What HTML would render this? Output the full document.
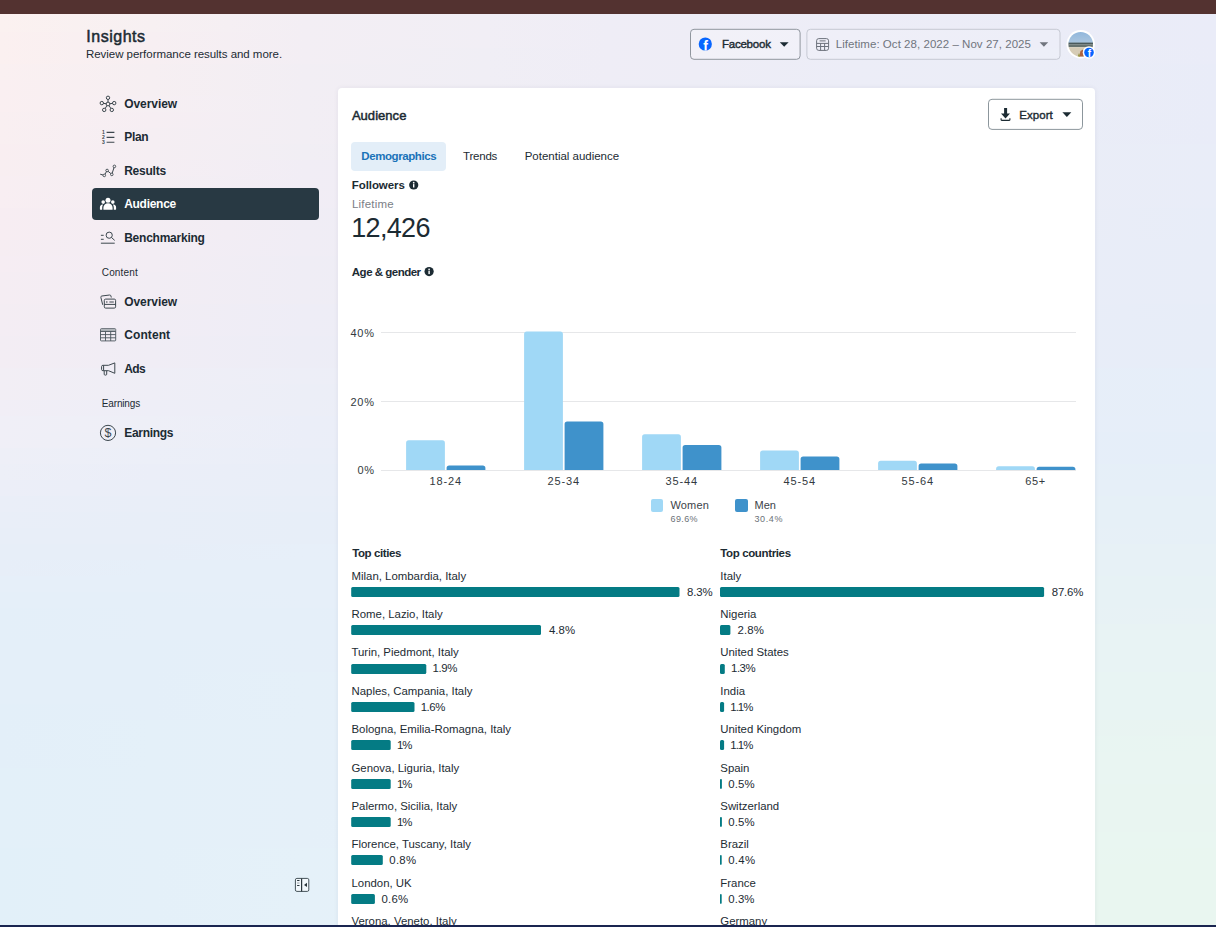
<!DOCTYPE html>
<html lang="en">
<head>
<meta charset="utf-8">
<title>Insights - Audience</title>
<style>
*{box-sizing:border-box;margin:0;padding:0}
html,body{width:1216px;height:927px;overflow:hidden}
body{font-family:"Liberation Sans",sans-serif;color:#1c2b33;position:relative;background:#f1eef5}
.abs{position:absolute}
.bgs{position:absolute;left:0;width:1216px}
#topbar{left:0;top:0;width:1216px;height:13.5px;background:#533230}
#botbar{left:0;top:924.5px;width:1216px;height:3px;background:#1a2550}
.t{position:absolute;white-space:pre;line-height:1;color:#1c2b33}
svg{position:absolute;overflow:visible}
#sel{left:92.3px;top:188.3px;width:226.5px;height:31.3px;background:#283943;border-radius:4px}
.btn{position:absolute;border:1px solid #8d939b;border-radius:4px;background:rgba(255,255,255,.3)}
#card{left:338px;top:88px;width:757px;height:850px;background:#fff;border-radius:4px;box-shadow:0 0 5px rgba(40,40,80,.07)}
#tab{left:351px;top:142.3px;width:95px;height:28.5px;background:#e3eef8;border-radius:4px}
.bar{position:absolute;height:10px;background:#047b84;border-radius:1.5px}
.grid{position:absolute;left:381px;width:695px;height:1px;background:#e6e7e9}
.bw{position:absolute;background:#a0d8f6;border-radius:3px 3px 0 0}
.bm{position:absolute;background:#3f92cb;border-radius:3px 3px 0 0}
</style>
</head>
<body>
<div id="bg"><div class="bgs" style="top:0px;height:16px;background:linear-gradient(90deg,#fcf1f0 0%,#f8f0f2 12.5%,#f3eff4 25%,#f1eef5 40%,#efedf6 50%,#eeedf6 57%,#ededf7 70%,#ebecf7 85%,#eaecf8 100%)"></div><div class="bgs" style="top:16px;height:16px;background:linear-gradient(90deg,#fbf1f0 0%,#f7f0f2 12.5%,#f3eef4 25%,#f1eef5 40%,#efedf6 50%,#eeedf6 57%,#ededf7 70%,#ebecf7 85%,#eaecf8 100%)"></div><div class="bgs" style="top:32px;height:16px;background:linear-gradient(90deg,#fbf0f0 0%,#f7eff2 12.5%,#f3eef4 25%,#f1eef5 40%,#efedf6 50%,#eeedf6 57%,#ededf7 70%,#ebecf7 85%,#eaecf8 100%)"></div><div class="bgs" style="top:48px;height:16px;background:linear-gradient(90deg,#fbf0f0 0%,#f7eff2 12.5%,#f3eef4 25%,#f0eef5 40%,#efedf6 50%,#eeedf6 57%,#ecedf7 70%,#ebedf7 85%,#eaecf8 100%)"></div><div class="bgs" style="top:64px;height:16px;background:linear-gradient(90deg,#faf0f1 0%,#f6eff2 12.5%,#f2eef4 25%,#f0eef5 40%,#efedf6 50%,#eeedf6 57%,#ecedf7 70%,#ebedf7 85%,#e9ecf8 100%)"></div><div class="bgs" style="top:80px;height:16px;background:linear-gradient(90deg,#faeff1 0%,#f6eff2 12.5%,#f2eef4 25%,#f0eef5 40%,#eeedf6 50%,#ededf6 57%,#ecedf7 70%,#ebedf7 85%,#e9ecf8 100%)"></div><div class="bgs" style="top:96px;height:16px;background:linear-gradient(90deg,#faeff1 0%,#f6eff3 12.5%,#f2eef4 25%,#f0edf5 40%,#eeedf6 50%,#ededf6 57%,#ecedf7 70%,#ebedf7 85%,#e9ecf8 100%)"></div><div class="bgs" style="top:112px;height:16px;background:linear-gradient(90deg,#f9eff1 0%,#f6eef3 12.5%,#f2eef4 25%,#f0edf5 40%,#eeedf6 50%,#ededf6 57%,#ecedf7 70%,#eaedf7 85%,#e9ecf8 100%)"></div><div class="bgs" style="top:128px;height:16px;background:linear-gradient(90deg,#f9eff1 0%,#f5eef3 12.5%,#f2eef4 25%,#efedf5 40%,#eeedf6 50%,#ededf6 57%,#ecedf7 70%,#eaedf7 85%,#e9ecf8 100%)"></div><div class="bgs" style="top:144px;height:16px;background:linear-gradient(90deg,#f9eef1 0%,#f5eef3 12.5%,#f1eef4 25%,#efedf5 40%,#eeedf6 50%,#ededf6 57%,#ecedf7 70%,#eaedf7 85%,#e9edf8 100%)"></div><div class="bgs" style="top:160px;height:16px;background:linear-gradient(90deg,#f8eef1 0%,#f5eef3 12.5%,#f1edf5 25%,#efedf5 40%,#eeedf6 50%,#ededf6 57%,#ebedf7 70%,#eaedf7 85%,#e9edf8 100%)"></div><div class="bgs" style="top:176px;height:16px;background:linear-gradient(90deg,#f8eef2 0%,#f4eef3 12.5%,#f1edf5 25%,#efedf5 40%,#ededf6 50%,#ecedf6 57%,#ebedf7 70%,#eaedf7 85%,#e9edf8 100%)"></div><div class="bgs" style="top:192px;height:16px;background:linear-gradient(90deg,#f8eef2 0%,#f4edf3 12.5%,#f1edf5 25%,#efedf6 40%,#ededf6 50%,#ecedf6 57%,#ebedf7 70%,#eaedf7 85%,#e9edf8 100%)"></div><div class="bgs" style="top:208px;height:16px;background:linear-gradient(90deg,#f7edf2 0%,#f4edf3 12.5%,#f0edf5 25%,#eeedf6 40%,#ededf6 50%,#ecedf7 57%,#ebedf7 70%,#eaedf7 85%,#e8edf8 100%)"></div><div class="bgs" style="top:224px;height:16px;background:linear-gradient(90deg,#f7edf2 0%,#f4edf3 12.5%,#f0edf5 25%,#eeedf6 40%,#ededf6 50%,#ecedf7 57%,#ebedf7 70%,#eaedf7 85%,#e8edf8 100%)"></div><div class="bgs" style="top:240px;height:16px;background:linear-gradient(90deg,#f6edf2 0%,#f3edf4 12.5%,#f0edf5 25%,#eeedf6 40%,#ededf6 50%,#ecedf7 57%,#ebedf7 70%,#e9edf8 85%,#e8edf8 100%)"></div><div class="bgs" style="top:256px;height:16px;background:linear-gradient(90deg,#f6edf3 0%,#f3edf4 12.5%,#efedf5 25%,#eeedf6 40%,#ecedf6 50%,#ebedf7 57%,#eaedf7 70%,#e9edf8 85%,#e8edf8 100%)"></div><div class="bgs" style="top:272px;height:16px;background:linear-gradient(90deg,#f5edf3 0%,#f2edf4 12.5%,#efedf5 25%,#ededf6 40%,#ecedf6 50%,#ebedf7 57%,#eaedf7 70%,#e9edf8 85%,#e8edf8 100%)"></div><div class="bgs" style="top:288px;height:16px;background:linear-gradient(90deg,#f5edf3 0%,#f2edf4 12.5%,#efedf5 25%,#ededf6 40%,#ecedf7 50%,#ebedf7 57%,#eaedf7 70%,#e9edf8 85%,#e8edf8 100%)"></div><div class="bgs" style="top:304px;height:16px;background:linear-gradient(90deg,#f4edf3 0%,#f1edf4 12.5%,#eeedf6 25%,#ededf6 40%,#ebedf7 50%,#ebedf7 57%,#eaedf7 70%,#e9edf8 85%,#e7edf8 100%)"></div><div class="bgs" style="top:320px;height:16px;background:linear-gradient(90deg,#f4edf4 0%,#f1edf5 12.5%,#eeedf6 25%,#ecedf6 40%,#ebedf7 50%,#eaedf7 57%,#e9edf7 70%,#e8edf8 85%,#e7edf8 100%)"></div><div class="bgs" style="top:336px;height:16px;background:linear-gradient(90deg,#f3edf4 0%,#f0edf5 12.5%,#ededf6 25%,#ecedf7 40%,#ebedf7 50%,#eaedf7 57%,#e9edf8 70%,#e8edf8 85%,#e7edf8 100%)"></div><div class="bgs" style="top:352px;height:16px;background:linear-gradient(90deg,#f3edf4 0%,#f0edf5 12.5%,#ededf6 25%,#ebedf7 40%,#eaedf7 50%,#eaedf7 57%,#e9edf8 70%,#e8edf8 85%,#e7edf8 100%)"></div><div class="bgs" style="top:368px;height:16px;background:linear-gradient(90deg,#f2eef5 0%,#efeef6 12.5%,#edeef7 25%,#ebeef7 40%,#eaeef7 50%,#e9eef8 57%,#e8eef8 70%,#e7eef8 85%,#e6eef9 100%)"></div><div class="bgs" style="top:384px;height:16px;background:linear-gradient(90deg,#f2eef5 0%,#efeef6 12.5%,#eceef7 25%,#ebeef7 40%,#eaeef8 50%,#e9eef8 57%,#e8eef8 70%,#e7eef8 85%,#e6eef9 100%)"></div><div class="bgs" style="top:400px;height:16px;background:linear-gradient(90deg,#f1eef6 0%,#eeeef7 12.5%,#eceef7 25%,#eaeef8 40%,#e9eef8 50%,#e9eef8 57%,#e8eef8 70%,#e7eef8 85%,#e6eef9 100%)"></div><div class="bgs" style="top:416px;height:16px;background:linear-gradient(90deg,#f0eff7 0%,#eeeff7 12.5%,#ebeef8 25%,#eaeef8 40%,#e9eef8 50%,#e8eef8 57%,#e7eef8 70%,#e7eef9 85%,#e6eef9 100%)"></div><div class="bgs" style="top:432px;height:16px;background:linear-gradient(90deg,#f0eff7 0%,#edeff7 12.5%,#ebeef8 25%,#e9eef8 40%,#e8eef8 50%,#e8eef8 57%,#e7eef9 70%,#e6eef9 85%,#e5eef9 100%)"></div><div class="bgs" style="top:448px;height:16px;background:linear-gradient(90deg,#eeeff7 0%,#eceff8 12.5%,#eaeef8 25%,#e9eef8 40%,#e8eef8 50%,#e7eef8 57%,#e7eef9 70%,#e6eef9 85%,#e5eef9 100%)"></div><div class="bgs" style="top:464px;height:16px;background:linear-gradient(90deg,#edeff7 0%,#ebeef8 12.5%,#e9eef8 25%,#e8eef8 40%,#e7eef9 50%,#e7eef8 57%,#e7eef8 70%,#e6eff8 85%,#e5eff8 100%)"></div><div class="bgs" style="top:480px;height:16px;background:linear-gradient(90deg,#eceef8 0%,#eaeef8 12.5%,#e9eef8 25%,#e8eef8 40%,#e7eef9 50%,#e7eef8 57%,#e6eff8 70%,#e6eff8 85%,#e6eff8 100%)"></div><div class="bgs" style="top:496px;height:16px;background:linear-gradient(90deg,#eaeef8 0%,#e9eef8 12.5%,#e8eef8 25%,#e7eef8 40%,#e7eef9 50%,#e7eff8 57%,#e6eff8 70%,#e6f0f7 85%,#e6f0f7 100%)"></div><div class="bgs" style="top:512px;height:16px;background:linear-gradient(90deg,#e9eef8 0%,#e8eef8 12.5%,#e7eef8 25%,#e7eef9 40%,#e7eef9 50%,#e6eff8 57%,#e6eff8 70%,#e6f0f7 85%,#e6f0f7 100%)"></div><div class="bgs" style="top:528px;height:16px;background:linear-gradient(90deg,#e8eef8 0%,#e8eef8 12.5%,#e7eef8 25%,#e7eef9 40%,#e6eef9 50%,#e6eff8 57%,#e6f0f8 70%,#e7f0f7 85%,#e6f0f7 100%)"></div><div class="bgs" style="top:544px;height:16px;background:linear-gradient(90deg,#e7eef8 0%,#e7eef8 12.5%,#e7eff9 25%,#e6eff9 40%,#e6eff9 50%,#e6eff8 57%,#e7f0f7 70%,#e7f1f6 85%,#e7f1f6 100%)"></div><div class="bgs" style="top:560px;height:16px;background:linear-gradient(90deg,#e7eef8 0%,#e6eff9 12.5%,#e6eff9 25%,#e6eff9 40%,#e6eff9 50%,#e6eff8 57%,#e7f0f7 70%,#e7f1f6 85%,#e7f1f6 100%)"></div><div class="bgs" style="top:576px;height:16px;background:linear-gradient(90deg,#e6eff9 0%,#e6eff9 12.5%,#e6eff9 25%,#e6eff9 40%,#e6eff9 50%,#e6eff8 57%,#e7f0f7 70%,#e7f2f5 85%,#e7f2f5 100%)"></div><div class="bgs" style="top:592px;height:16px;background:linear-gradient(90deg,#e5eff9 0%,#e5eff9 12.5%,#e6eff9 25%,#e6eff9 40%,#e6eff9 50%,#e6f0f8 57%,#e7f1f7 70%,#e7f2f5 85%,#e7f2f5 100%)"></div><div class="bgs" style="top:608px;height:16px;background:linear-gradient(90deg,#e4eff9 0%,#e5eff9 12.5%,#e5eff9 25%,#e6eff9 40%,#e6eff9 50%,#e6f0f8 57%,#e7f1f6 70%,#e7f2f5 85%,#e8f2f5 100%)"></div><div class="bgs" style="top:624px;height:16px;background:linear-gradient(90deg,#e4eff9 0%,#e5eff9 12.5%,#e5eff9 25%,#e5eff9 40%,#e6eff9 50%,#e6f0f8 57%,#e7f1f6 70%,#e8f3f4 85%,#e8f3f4 100%)"></div><div class="bgs" style="top:640px;height:16px;background:linear-gradient(90deg,#e4eff9 0%,#e4eff9 12.5%,#e5eff9 25%,#e6eff9 40%,#e6eff9 50%,#e6f0f8 57%,#e7f2f6 70%,#e8f3f4 85%,#e8f3f4 100%)"></div><div class="bgs" style="top:656px;height:16px;background:linear-gradient(90deg,#e4eff9 0%,#e4eff9 12.5%,#e5eff9 25%,#e6eff9 40%,#e6f0f9 50%,#e6f0f8 57%,#e7f2f6 70%,#e8f3f4 85%,#e8f3f4 100%)"></div><div class="bgs" style="top:672px;height:16px;background:linear-gradient(90deg,#e4eff9 0%,#e4eff9 12.5%,#e5f0f9 25%,#e6f0f9 40%,#e6f0f9 50%,#e6f0f8 57%,#e7f2f6 70%,#e8f4f3 85%,#e8f4f3 100%)"></div><div class="bgs" style="top:688px;height:16px;background:linear-gradient(90deg,#e4eff9 0%,#e4eff9 12.5%,#e5f0f9 25%,#e6f0f9 40%,#e6f0f9 50%,#e7f1f7 57%,#e7f2f5 70%,#e8f4f3 85%,#e8f4f3 100%)"></div><div class="bgs" style="top:704px;height:16px;background:linear-gradient(90deg,#e3eff9 0%,#e4eff9 12.5%,#e5f0f9 25%,#e6f0f9 40%,#e6f0f9 50%,#e7f1f7 57%,#e7f2f5 70%,#e8f4f3 85%,#e8f4f3 100%)"></div><div class="bgs" style="top:720px;height:16px;background:linear-gradient(90deg,#e3eff9 0%,#e4f0f9 12.5%,#e5f0f9 25%,#e6f0f9 40%,#e6f0f9 50%,#e7f1f7 57%,#e8f3f5 70%,#e8f4f2 85%,#e9f4f2 100%)"></div><div class="bgs" style="top:736px;height:16px;background:linear-gradient(90deg,#e3eff9 0%,#e4f0f9 12.5%,#e5f0f9 25%,#e6f0f9 40%,#e6f0f9 50%,#e7f1f7 57%,#e8f3f5 70%,#e8f5f2 85%,#e9f5f2 100%)"></div><div class="bgs" style="top:752px;height:16px;background:linear-gradient(90deg,#e3eff9 0%,#e4f0f9 12.5%,#e5f0f9 25%,#e6f0f9 40%,#e6f0f9 50%,#e7f1f7 57%,#e8f3f5 70%,#e9f5f2 85%,#e9f5f2 100%)"></div><div class="bgs" style="top:768px;height:16px;background:linear-gradient(90deg,#e3f0f9 0%,#e4f0f9 12.5%,#e5f0f9 25%,#e6f0f9 40%,#e6f0f9 50%,#e7f1f7 57%,#e8f3f5 70%,#e9f5f2 85%,#e9f5f2 100%)"></div><div class="bgs" style="top:784px;height:16px;background:linear-gradient(90deg,#e3f0f9 0%,#e4f0f9 12.5%,#e5f0f9 25%,#e6f0f9 40%,#e6f0f9 50%,#e7f1f7 57%,#e8f3f4 70%,#e9f5f1 85%,#e9f5f1 100%)"></div><div class="bgs" style="top:800px;height:16px;background:linear-gradient(90deg,#e3f0f9 0%,#e4f0f9 12.5%,#e5f0f9 25%,#e6f0f9 40%,#e6f1f8 50%,#e7f2f7 57%,#e8f3f4 70%,#e9f5f1 85%,#e9f5f1 100%)"></div><div class="bgs" style="top:816px;height:16px;background:linear-gradient(90deg,#e3f0f9 0%,#e4f0f9 12.5%,#e5f0f9 25%,#e6f1f9 40%,#e6f1f8 50%,#e7f2f7 57%,#e8f3f4 70%,#e9f5f1 85%,#e9f5f1 100%)"></div><div class="bgs" style="top:832px;height:16px;background:linear-gradient(90deg,#e3f0f9 0%,#e4f0f9 12.5%,#e5f0f9 25%,#e6f1f9 40%,#e7f1f8 50%,#e7f2f7 57%,#e8f4f4 70%,#e9f6f1 85%,#e9f6f1 100%)"></div><div class="bgs" style="top:848px;height:16px;background:linear-gradient(90deg,#e2f0f9 0%,#e4f0f9 12.5%,#e5f1f9 25%,#e6f1f8 40%,#e7f1f8 50%,#e7f2f7 57%,#e8f4f4 70%,#e9f6f1 85%,#e9f6f0 100%)"></div><div class="bgs" style="top:864px;height:16px;background:linear-gradient(90deg,#e2f0f9 0%,#e4f0f9 12.5%,#e5f1f9 25%,#e6f1f8 40%,#e7f1f8 50%,#e7f2f7 57%,#e8f4f4 70%,#e9f6f0 85%,#e9f6f0 100%)"></div><div class="bgs" style="top:880px;height:16px;background:linear-gradient(90deg,#e2f0f9 0%,#e4f0f9 12.5%,#e5f1f9 25%,#e6f1f8 40%,#e7f1f8 50%,#e7f2f7 57%,#e8f4f4 70%,#e9f6f0 85%,#e9f6f0 100%)"></div><div class="bgs" style="top:896px;height:16px;background:linear-gradient(90deg,#e2f0f9 0%,#e4f0f9 12.5%,#e5f1f9 25%,#e6f1f8 40%,#e7f1f8 50%,#e8f2f7 57%,#e8f4f4 70%,#e9f6f0 85%,#e9f6f0 100%)"></div><div class="bgs" style="top:912px;height:15px;background:linear-gradient(90deg,#e2f0f9 0%,#e4f0f9 12.5%,#e5f1f9 25%,#e6f1f8 40%,#e7f1f8 50%,#e8f2f7 57%,#e8f4f4 70%,#e9f6f0 85%,#e9f6f0 100%)"></div></div>
<div class="abs" id="topbar"></div>
<header id="page-header">
<div class="t" style="left:86.3px;top:29.0px;font-size:16px;letter-spacing:0.52px;-webkit-text-stroke:.5px">Insights</div>
<div class="t" style="left:86.0px;top:49.0px;font-size:11.5px;letter-spacing:-0.04px">Review performance results and more.</div>
</header>
<nav id="sidebar">
<div class="abs" id="sel"></div>
<div class="t" style="left:124.2px;top:98.0px;font-size:12px;font-weight:bold;letter-spacing:-0.05px">Overview</div>
<div class="t" style="left:124.2px;top:131.0px;font-size:12px;font-weight:bold;letter-spacing:-0.29px">Plan</div>
<div class="t" style="left:124.2px;top:165.0px;font-size:12px;font-weight:bold;letter-spacing:-0.24px">Results</div>
<div class="t" style="left:124.2px;top:198.0px;font-size:12px;font-weight:bold;letter-spacing:-0.28px;color:#fff">Audience</div>
<div class="t" style="left:124.2px;top:232.0px;font-size:12px;font-weight:bold;letter-spacing:-0.24px">Benchmarking</div>
<div class="t" style="left:124.2px;top:296.0px;font-size:12px;font-weight:bold;letter-spacing:-0.05px">Overview</div>
<div class="t" style="left:124.2px;top:329.0px;font-size:12px;font-weight:bold;letter-spacing:0.1px">Content</div>
<div class="t" style="left:124.2px;top:363.0px;font-size:12px;font-weight:bold;letter-spacing:-0.56px">Ads</div>
<div class="t" style="left:124.2px;top:427.0px;font-size:12px;font-weight:bold;letter-spacing:-0.29px">Earnings</div>
<div class="t" style="left:101.8px;top:268.0px;font-size:10px;letter-spacing:0.14px">Content</div>
<div class="t" style="left:101.8px;top:399.0px;font-size:10px;letter-spacing:-0.16px">Earnings</div>
<svg style="left:0;top:0" width="1216" height="927" viewBox="0 0 1216 927" fill="none" ><g stroke="#3c474e" stroke-width="1"><line x1="108" y1="104" x2="108" y2="97.8"/><line x1="108" y1="104" x2="101.8" y2="103.1"/><line x1="108" y1="104" x2="114.2" y2="103.1"/><line x1="108" y1="104" x2="104.2" y2="109.9"/><line x1="108" y1="104" x2="111.8" y2="109.9"/></g><g stroke="#3c474e" stroke-width="1" fill="#f9f0f2"><circle cx="108" cy="104" r="1.9"/><circle cx="108" cy="97.8" r="1.7"/><circle cx="101.8" cy="103.1" r="1.7"/><circle cx="114.2" cy="103.1" r="1.7"/><circle cx="104.2" cy="109.9" r="1.7"/><circle cx="111.8" cy="109.9" r="1.7"/></g><g stroke="#3c474e" stroke-width="1.1"><path d="M106.6 132.4H114.4M106.6 137.4H114.4M106.6 142.3H114.4"/></g><g fill="#3c474e" font-family="Liberation Sans, sans-serif" font-size="5" font-weight="bold"><text x="101.9" y="134.2">1</text><text x="101.9" y="139.2">2</text><text x="101.9" y="144.1">3</text></g><polyline stroke="#3c474e" stroke-width="1" points="100.2,174.2 104.3,175.4 107.1,170.5 111.8,174.4 114.4,166.4"/><g stroke="#3c474e" stroke-width="0.9" fill="#f7eef2"><circle cx="104.3" cy="175.4" r="1.3"/><circle cx="107.1" cy="170.5" r="1.3"/><circle cx="111.8" cy="174.4" r="1.3"/><circle cx="114.4" cy="166.4" r="1.3"/></g><g fill="#fff"><circle cx="108" cy="200.3" r="2.5"/><circle cx="103.2" cy="202.1" r="1.8"/><circle cx="112.8" cy="202.1" r="1.8"/><path d="M103.4 209.7v-1.6a4.6 4.6 0 0 1 9.2 0v1.6a.4.4 0 0 1-.4.4h-8.400a.4.4 0 0 1-.4-.4z" transform="translate(0,-0.3)"/><path d="M102.6 204.6a3 3 0 0 0-2.700 3v1.700a.4.4 0 0 0 .4.4h1.900v-2.100a5.600 5.600 0 0 1 .9-3z"/><path d="M113.4 204.6a3 3 0 0 1 2.700 3v1.700a.4.4 0 0 1-.4.4h-1.900v-2.100a5.600 5.600 0 0 0-.9-3z"/></g><g stroke="#3c474e" stroke-width="1"><circle cx="109.2" cy="235.2" r="3.1"/><path d="M111.500 237.500L114.700 240.400M100.900 235.300H103.700M100.900 239.300H103.700M100.900 243.200H114.700"/></g><g stroke="#3c474e" stroke-width="1"><path d="M102.700 304.800l-1.800-7.300a1.200 1.200 0 0 1 .9-1.500l7.800-1.000a1.200 1.200 0 0 1 1.300.9l.4 1.600"/><rect x="104.300" y="299.100" width="11.300" height="9" rx="1.300" fill="#f4eef4"/><path d="M104.300 304.400H115.600M109.400 302H113.800"/><path d="M106.300 300.900v2.200l1.700-1.100z" fill="#3c474e" stroke="none"/></g><g stroke="#4a555c" stroke-width=".9"><rect x="100.500" y="328.700" width="15.200" height="12.200" rx=".8"/><rect x="100.900" y="329.200" width="14.400" height="2" fill="#a9afb4" stroke="none"/><path d="M100.500 331.500H115.700M100.500 334.600H115.700M100.500 337.800H115.700M105.500 331.500V340.900M110.700 331.500V340.900"/></g><g stroke="#3c474e" stroke-width="1" stroke-linejoin="round"><path d="M114.800 362.900v10.400l-6.300-2.600h-5.600a1.300 1.300 0 0 1-1.300-1.300v-2.800a1.300 1.300 0 0 1 1.300-1.300h5.600z"/><path d="M104.200 370.900v3.300a.9.900 0 0 0 .9.900h.700a.9.900 0 0 0 .9-.9v-3.300M103.600 365.500v5"/></g><circle cx="108" cy="432.900" r="7.600" stroke="#3c474e" stroke-width="1"/><text x="108" y="437.200" text-anchor="middle" fill="#3c474e" font-family="Liberation Sans, sans-serif" font-size="12.500">$</text><g stroke="#46535a" stroke-width="1"><rect x="295.400" y="878.400" width="13.400" height="13" rx="1.500" fill="#f2f8fc"/><path d="M301.600 878.400V891.400" stroke-width="1.200" stroke="#2a363d"/><path d="M297.100 880.500H299.500M297.100 885.500H299.500" stroke="#2a363d"/><path d="M297.100 883H299.500" stroke="#9aa2a8"/><path d="M307 882.700v4.400l-3-2.200z" fill="#2a363d" stroke="none"/></g></svg>
</nav>
<div id="controls">
<svg style="left:0;top:0" width="1216" height="927" viewBox="0 0 1216 927" fill="none" ><rect x="690.5" y="29.3" width="109.6" height="30" rx="3.5" fill="rgba(255,255,255,.25)" stroke="#90969e"/><rect x="806.9" y="29.3" width="253.1" height="30" rx="3.5" fill="rgba(255,255,255,.12)" stroke="#c6c9d3"/></svg>
<div class="t" style="left:721.9px;top:39.0px;font-size:11.5px;letter-spacing:-0.21px;-webkit-text-stroke:.4px">Facebook</div>
<div class="t" style="left:835.8px;top:39.0px;font-size:11.5px;letter-spacing:0.04px;color:#70757e">Lifetime: Oct 28, 2022 – Nov 27, 2025</div>
<svg style="left:0;top:0" width="1216" height="927" viewBox="0 0 1216 927" fill="none" ><clipPath id="fbc"><circle cx="705.3" cy="44" r="6.6"/></clipPath><circle cx="705.3" cy="44" r="6.6" fill="#0866ff"/><text x="705.6" y="50.6" text-anchor="middle" fill="#fff" font-family="Liberation Sans, sans-serif" font-weight="bold" font-size="14" clip-path="url(#fbc)">f</text><path d="M779.800 42.200h8.800l-4.400 4.600z" fill="#1c2b33"/><path d="M1039.600 42.200h8.600l-4.300 4.600z" fill="#70757e"/><g stroke="#6d727c" stroke-width="1"><rect x="816.600" y="38.600" width="12" height="11.800" rx="2.200"/><path d="M816.600 43.400H828.600M816.600 46.500H828.600M820.600 43.400V50.400M824.600 43.400V50.400M819.600 40.900H825.600" /></g><clipPath id="av"><circle cx="1080.7" cy="44.25" r="12.3"/></clipPath><circle cx="1080.7" cy="44.25" r="14.2" fill="#fff"/><linearGradient id="sky" x1="0" y1="0" x2="0" y2="1"><stop offset="0" stop-color="#8fb6dc"/><stop offset="1" stop-color="#abc6de"/></linearGradient><g clip-path="url(#av)"><rect x="1068" y="31" width="26" height="12" fill="url(#sky)"/><rect x="1068" y="42.600" width="26" height="2" fill="#4b5a5b"/><rect x="1068" y="44.600" width="26" height="2.600" fill="#67736f"/><rect x="1068" y="47.200" width="26" height="10" fill="#d6ccb6"/><path d="M1079 57l1.500-6 2.500-1.500 1 7.500z" fill="#b0653f"/><path d="M1077.500 57l1.500-4 1.200 4z" fill="#95983f"/></g><clipPath id="fbb"><circle cx="1089" cy="52.500" r="4.800"/></clipPath><circle cx="1089" cy="52.500" r="6.300" fill="#fff"/><circle cx="1089" cy="52.500" r="4.800" fill="#0866ff"/><text x="1089.300" y="57.400" text-anchor="middle" fill="#fff" font-family="Liberation Sans, sans-serif" font-weight="bold" font-size="10" clip-path="url(#fbb)">f</text></svg>
</div>
<main id="audience">
<div class="abs" id="card"></div>
<div class="t" style="left:351.9px;top:109.0px;font-size:13px;letter-spacing:0.04px;-webkit-text-stroke:.5px">Audience</div>
<svg style="left:0;top:0" width="1216" height="927" viewBox="0 0 1216 927" fill="none" ><rect x="988.5" y="99.3" width="94" height="30.1" rx="3.5" fill="#fff" stroke="#8c969c"/></svg>
<div class="t" style="left:1019.2px;top:110.0px;font-size:11.5px;letter-spacing:0.06px;-webkit-text-stroke:.4px">Export</div>
<div class="abs" id="tab"></div>
<div class="t" style="left:361.3px;top:151.0px;font-size:11.5px;font-weight:bold;letter-spacing:-0.42px;color:#1a73b8">Demographics</div>
<div class="t" style="left:463.0px;top:151.0px;font-size:11.5px;letter-spacing:-0.2px">Trends</div>
<div class="t" style="left:524.7px;top:151.0px;font-size:11.5px;letter-spacing:-0.01px">Potential audience</div>
<div class="t" style="left:351.8px;top:180.0px;font-size:11.5px;font-weight:bold;letter-spacing:-0.08px">Followers</div>
<div class="t" style="left:352.0px;top:199.0px;font-size:11.5px;letter-spacing:0.19px;color:#7b8087">Lifetime</div>
<div class="t" style="left:351.2px;top:215.0px;font-size:27px;letter-spacing:-0.67px;color:#1c2b33">12,426</div>
<div class="t" style="left:351.8px;top:267.0px;font-size:11.5px;font-weight:bold;letter-spacing:-0.5px">Age &amp; gender</div>
<svg style="left:0;top:0" width="1216" height="927" viewBox="0 0 1216 927" fill="none" ><path d="M1004.100 108h3v5.600h2.900l-4.500 4.900-4.500-4.900h3.100z" fill="#1c2b33"/><path d="M1001.100 118.300v1.500a.6.6 0 0 0 .6.600h7.600a.6.600 0 0 0 .6-.6v-1.500" stroke="#1c2b33" stroke-width="1.100"/><path d="M1062.400 112.300h8.900l-4.450 4.800z" fill="#1c2b33"/><circle cx="413.7" cy="185" r="4.600" fill="#1c2b33"/><rect x="413.0" y="184.1" width="1.400" height="3.400" fill="#fff"/><circle cx="413.7" cy="182.7" r=".85" fill="#fff"/><circle cx="429.1" cy="271.6" r="4.600" fill="#1c2b33"/><rect x="428.40000000000003" y="270.70000000000005" width="1.400" height="3.400" fill="#fff"/><circle cx="429.1" cy="269.3" r=".85" fill="#fff"/></svg>
<section id="age-gender-chart">
<div class="grid" style="top:332.0px"></div>
<div class="grid" style="top:400.8px"></div>
<div class="grid" style="top:469.5px"></div>
<div class="t" style="left:350.6px;top:328.0px;font-size:11px;letter-spacing:0.66px;color:#333a40">40%</div>
<div class="t" style="left:350.6px;top:397.0px;font-size:11px;letter-spacing:0.66px;color:#333a40">20%</div>
<div class="t" style="left:357.4px;top:465.0px;font-size:11px;letter-spacing:0.7px;color:#333a40">0%</div>
<div class="t" style="left:429.4px;top:476.0px;font-size:11px;letter-spacing:0.89px;color:#333a40">18-24</div>
<div class="t" style="left:547.4px;top:476.0px;font-size:11px;letter-spacing:0.89px;color:#333a40">25-34</div>
<div class="t" style="left:665.4px;top:476.0px;font-size:11px;letter-spacing:0.89px;color:#333a40">35-44</div>
<div class="t" style="left:783.4px;top:476.0px;font-size:11px;letter-spacing:0.89px;color:#333a40">45-54</div>
<div class="t" style="left:901.4px;top:476.0px;font-size:11px;letter-spacing:0.89px;color:#333a40">55-64</div>
<div class="t" style="left:1025.3px;top:476.0px;font-size:11px;letter-spacing:0.64px;color:#333a40">65+</div>
<svg style="left:0;top:0" width="1216" height="927" viewBox="0 0 1216 927" fill="none" ><path d="M406.1 470V442.9a2.6 2.6 0 0 1 2.6-2.6H442.3a2.6 2.6 0 0 1 2.6 2.6V470z" fill="#a0d8f6"/><path d="M446.6 470V468.0a2.6 2.6 0 0 1 2.6-2.6H482.8a2.6 2.6 0 0 1 2.6 2.6V470z" fill="#3f92cb"/><path d="M524.1 470V334.0a2.6 2.6 0 0 1 2.6-2.6H560.3a2.6 2.6 0 0 1 2.6 2.6V470z" fill="#a0d8f6"/><path d="M564.6 470V424.0a2.6 2.6 0 0 1 2.6-2.6H600.8a2.6 2.6 0 0 1 2.6 2.6V470z" fill="#3f92cb"/><path d="M642.1 470V436.8a2.6 2.6 0 0 1 2.6-2.6H678.3a2.6 2.6 0 0 1 2.6 2.6V470z" fill="#a0d8f6"/><path d="M682.6 470V447.6a2.6 2.6 0 0 1 2.6-2.6H718.8a2.6 2.6 0 0 1 2.6 2.6V470z" fill="#3f92cb"/><path d="M760.1 470V453.0a2.6 2.6 0 0 1 2.6-2.6H796.3a2.6 2.6 0 0 1 2.6 2.6V470z" fill="#a0d8f6"/><path d="M800.6 470V459.0a2.6 2.6 0 0 1 2.6-2.6H836.8a2.6 2.6 0 0 1 2.6 2.6V470z" fill="#3f92cb"/><path d="M878.1 470V463.4a2.6 2.6 0 0 1 2.6-2.6H914.3a2.6 2.6 0 0 1 2.6 2.6V470z" fill="#a0d8f6"/><path d="M918.6 470V466.1a2.6 2.6 0 0 1 2.6-2.6H954.8a2.6 2.6 0 0 1 2.6 2.6V470z" fill="#3f92cb"/><path d="M996.1 470V468.9a2.6 2.6 0 0 1 2.6-2.6H1032.3a2.6 2.6 0 0 1 2.6 2.6V470z" fill="#a0d8f6"/><path d="M1036.6 470V469.3a2.6 2.6 0 0 1 2.6-2.6H1072.8a2.6 2.6 0 0 1 2.6 2.6V470z" fill="#3f92cb"/></svg>
<div class="abs" style="left:651px;top:499.200px;width:12px;height:12.400px;background:#a0d8f6;border-radius:2px"></div>
<div class="abs" style="left:735.300px;top:499.200px;width:12.400px;height:12.400px;background:#3f92cb;border-radius:2px"></div>
<div class="t" style="left:670.5px;top:500.0px;font-size:11px;letter-spacing:0.16px;color:#3c4349">Women</div>
<div class="t" style="left:670.5px;top:515.0px;font-size:9px;letter-spacing:0.39px;color:#6b7177">69.6%</div>
<div class="t" style="left:754.5px;top:500.0px;font-size:11px;letter-spacing:0.03px;color:#3c4349">Men</div>
<div class="t" style="left:754.5px;top:515.0px;font-size:9px;letter-spacing:0.59px;color:#6b7177">30.4%</div>
</section>
<section id="top-lists">
<div class="t" style="left:352.2px;top:548.0px;font-size:11.5px;font-weight:bold;letter-spacing:-0.41px">Top cities</div>
<div class="t" style="left:720.2px;top:548.0px;font-size:11.5px;font-weight:bold;letter-spacing:-0.36px">Top countries</div>
<div class="t" style="left:351.5px;top:571.0px;font-size:11.4px">Milan, Lombardia, Italy</div>
<div class="t" style="left:687.1px;top:587.0px;font-size:11.4px;letter-spacing:-0.12px">8.3%</div>
<div class="t" style="left:351.5px;top:609.0px;font-size:11.4px">Rome, Lazio, Italy</div>
<div class="t" style="left:548.9px;top:625.0px;font-size:11.4px;letter-spacing:0.08px">4.8%</div>
<div class="t" style="left:351.5px;top:647.0px;font-size:11.4px">Turin, Piedmont, Italy</div>
<div class="t" style="left:432.5px;top:663.0px;font-size:11.4px;letter-spacing:-0.34px">1.9%</div>
<div class="t" style="left:351.5px;top:686.0px;font-size:11.4px">Naples, Campania, Italy</div>
<div class="t" style="left:420.7px;top:702.0px;font-size:11.4px;letter-spacing:-0.42px">1.6%</div>
<div class="t" style="left:351.5px;top:724.0px;font-size:11.4px">Bologna, Emilia-Romagna, Italy</div>
<div class="t" style="left:396.9px;top:740.0px;font-size:11.4px;letter-spacing:-0.88px">1%</div>
<div class="t" style="left:351.5px;top:763.0px;font-size:11.4px">Genova, Liguria, Italy</div>
<div class="t" style="left:396.9px;top:779.0px;font-size:11.4px;letter-spacing:-0.88px">1%</div>
<div class="t" style="left:351.5px;top:801.0px;font-size:11.4px">Palermo, Sicilia, Italy</div>
<div class="t" style="left:396.9px;top:817.0px;font-size:11.4px;letter-spacing:-0.88px">1%</div>
<div class="t" style="left:351.5px;top:839.0px;font-size:11.4px">Florence, Tuscany, Italy</div>
<div class="t" style="left:389.3px;top:855.0px;font-size:11.4px;letter-spacing:0.28px">0.8%</div>
<div class="t" style="left:351.5px;top:878.0px;font-size:11.4px">London, UK</div>
<div class="t" style="left:381.4px;top:894.0px;font-size:11.4px;letter-spacing:0.26px">0.6%</div>
<div class="t" style="left:351.5px;top:916.0px;font-size:11.4px">Verona, Veneto, Italy</div>
<div class="t" style="left:381.4px;top:932.0px;font-size:11.4px;letter-spacing:0.26px">0.6%</div>
<div class="t" style="left:720.3px;top:571.0px;font-size:11.4px">Italy</div>
<div class="t" style="left:1051.8px;top:587.0px;font-size:11.4px;letter-spacing:-0.18px">87.6%</div>
<div class="t" style="left:720.3px;top:609.0px;font-size:11.4px">Nigeria</div>
<div class="t" style="left:737.4px;top:625.0px;font-size:11.4px;letter-spacing:0.16px">2.8%</div>
<div class="t" style="left:720.3px;top:647.0px;font-size:11.4px">United States</div>
<div class="t" style="left:731.0px;top:663.0px;font-size:11.4px;letter-spacing:-0.44px">1.3%</div>
<div class="t" style="left:720.3px;top:686.0px;font-size:11.4px">India</div>
<div class="t" style="left:730.3px;top:702.0px;font-size:11.4px;letter-spacing:-0.99px">1.1%</div>
<div class="t" style="left:720.3px;top:724.0px;font-size:11.4px">United Kingdom</div>
<div class="t" style="left:730.3px;top:740.0px;font-size:11.4px;letter-spacing:-0.99px">1.1%</div>
<div class="t" style="left:720.3px;top:763.0px;font-size:11.4px">Spain</div>
<div class="t" style="left:728.3px;top:779.0px;font-size:11.4px;letter-spacing:0.11px">0.5%</div>
<div class="t" style="left:720.3px;top:801.0px;font-size:11.4px">Switzerland</div>
<div class="t" style="left:728.3px;top:817.0px;font-size:11.4px;letter-spacing:0.11px">0.5%</div>
<div class="t" style="left:720.3px;top:839.0px;font-size:11.4px">Brazil</div>
<div class="t" style="left:728.2px;top:855.0px;font-size:11.4px;letter-spacing:0.31px">0.4%</div>
<div class="t" style="left:720.3px;top:878.0px;font-size:11.4px">France</div>
<div class="t" style="left:728.2px;top:894.0px;font-size:11.4px;letter-spacing:0.11px">0.3%</div>
<div class="t" style="left:720.3px;top:916.0px;font-size:11.4px">Germany</div>
<div class="t" style="left:728.2px;top:932.0px;font-size:11.4px;letter-spacing:0.11px">0.3%</div>
<svg style="left:0;top:0" width="1216" height="927" viewBox="0 0 1216 927" fill="none" ><g fill="#047b84"><rect x="351.2" y="587.1" width="328.3" height="9.8" rx="1.5"/><rect x="351.2" y="625.1" width="189.8" height="9.8" rx="1.5"/><rect x="351.2" y="664.1" width="75.1" height="9.8" rx="1.5"/><rect x="351.2" y="702.1" width="63.3" height="9.8" rx="1.5"/><rect x="351.2" y="740.1" width="39.5" height="9.8" rx="1.5"/><rect x="351.2" y="779.1" width="39.5" height="9.8" rx="1.5"/><rect x="351.2" y="817.1" width="39.5" height="9.8" rx="1.5"/><rect x="351.2" y="855.1" width="31.6" height="9.8" rx="1.5"/><rect x="351.2" y="894.1" width="23.7" height="9.8" rx="1.5"/><rect x="351.2" y="932.1" width="23.7" height="9.8" rx="1.5"/><rect x="720.0" y="587.1" width="324.1" height="9.8" rx="1.5"/><rect x="720.0" y="625.1" width="10.4" height="9.8" rx="1.5"/><rect x="720.0" y="664.1" width="4.8" height="9.8" rx="1.5"/><rect x="720.0" y="702.1" width="4.1" height="9.8" rx="1.5"/><rect x="720.0" y="740.1" width="4.1" height="9.8" rx="1.5"/><rect x="720.0" y="779.1" width="1.9" height="9.8" rx="0.8"/><rect x="720.0" y="817.1" width="1.9" height="9.8" rx="0.8"/><rect x="720.0" y="855.1" width="1.7" height="9.8" rx="0.8"/><rect x="720.0" y="894.1" width="1.7" height="9.8" rx="0.8"/><rect x="720.0" y="932.1" width="1.7" height="9.8" rx="0.8"/></g></svg>
</section>
</main>
<div class="abs" id="botbar"></div>
</body>
</html>
